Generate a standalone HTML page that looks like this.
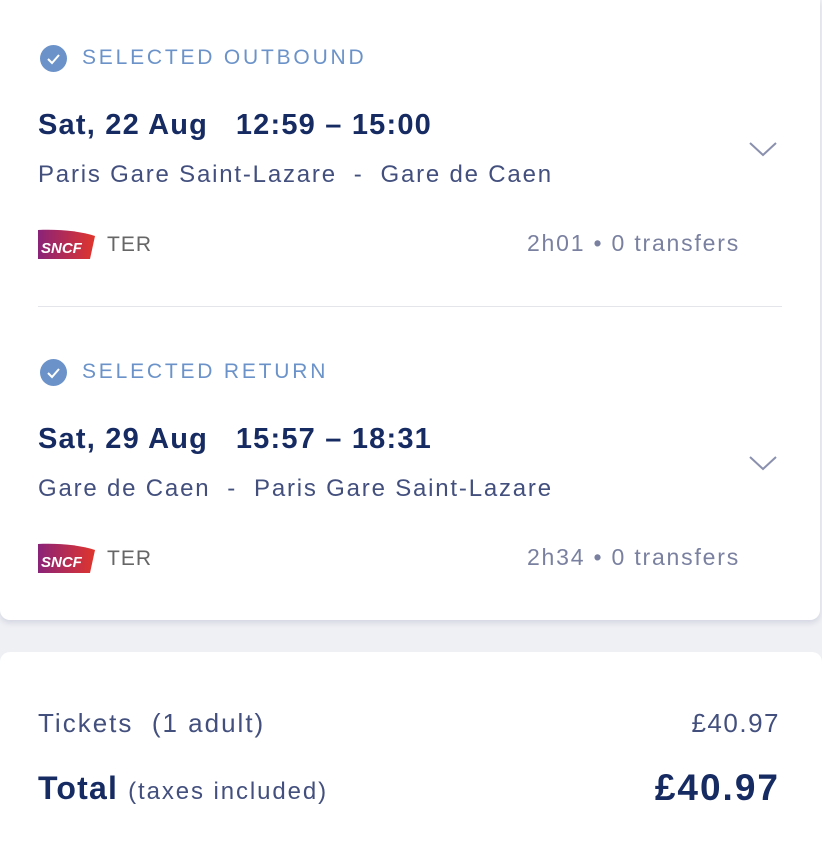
<!DOCTYPE html>
<html><head><style>
body{margin:0;width:822px;height:856px;background:#eff0f4;font-family:"Liberation Sans",sans-serif;overflow:hidden;position:relative}
.card{position:absolute;left:0;background:#fff;border-radius:0 0 10px 10px}
.c1{top:0;width:820px;height:620px;box-shadow:0 3px 6px rgba(60,70,120,.15)}
.c2{top:652px;width:822px;height:204px;border-radius:10px 10px 0 0}
.lbl{position:absolute;left:82px;color:#6b93c9;font-size:21px;letter-spacing:2.8px}
.chk{position:absolute;left:40px;width:27px;height:27px;border-radius:50%;background:#6b93c9}
.t{position:absolute;left:38px;color:#172b63;font-weight:bold;font-size:29px;letter-spacing:1.2px;white-space:pre}
.r{position:absolute;left:38px;color:#43507e;font-size:24px;letter-spacing:1.8px;white-space:pre}
.d{position:absolute;right:80px;color:#7a81a0;font-size:23px;letter-spacing:1.8px}
.ter{position:absolute;left:107px;color:#666;font-size:21px;letter-spacing:1px}
.sn{position:absolute;left:38px}
.chev{position:absolute;left:748px}
.sep{position:absolute;left:38px;top:306px;width:744px;height:1px;background:#e3e5ea}
</style></head><body>
<div class="card c1">
<div class="chk" style="top:45px"><svg width="27" height="27"><path d="M8 14l4 4 7-8" stroke="#fff" stroke-width="2" fill="none"/></svg></div>
<div class="lbl" style="top:46px">SELECTED OUTBOUND</div>
<div class="t" style="top:109px">Sat, 22 Aug   12:59 – 15:00</div>
<div class="r" style="top:161px">Paris Gare Saint-Lazare  -  Gare de Caen</div>
<svg class="chev" style="top:140px" width="30" height="18"><path d="M2 3l13 12 13-12" stroke="#8a90ad" stroke-width="2" fill="none"/></svg>
<svg class="sn" style="top:229px" width="58" height="30"><defs><linearGradient id="g" x1="0" x2="1"><stop offset="0" stop-color="#8a2378"/><stop offset="1" stop-color="#e0352c"/></linearGradient></defs><path d="M0 1C20 0 42 2 57 7L52 30H0Z" fill="url(#g)"/><text x="3" y="24" fill="#fff" font-size="15" font-style="italic" font-weight="bold" font-family="Liberation Sans">SNCF</text></svg>
<div class="ter" style="top:233px">TER</div>
<div class="d" style="top:230px">2h01 • 0 transfers</div>
<div class="sep"></div>
<div class="chk" style="top:359px"><svg width="27" height="27"><path d="M8 14l4 4 7-8" stroke="#fff" stroke-width="2" fill="none"/></svg></div>
<div class="lbl" style="top:360px">SELECTED RETURN</div>
<div class="t" style="top:423px">Sat, 29 Aug   15:57 – 18:31</div>
<div class="r" style="top:475px">Gare de Caen  -  Paris Gare Saint-Lazare</div>
<svg class="chev" style="top:454px" width="30" height="18"><path d="M2 3l13 12 13-12" stroke="#8a90ad" stroke-width="2" fill="none"/></svg>
<svg class="sn" style="top:543px" width="58" height="30"><path d="M0 1C20 0 42 2 57 7L52 30H0Z" fill="url(#g)"/><text x="3" y="24" fill="#fff" font-size="15" font-style="italic" font-weight="bold" font-family="Liberation Sans">SNCF</text></svg>
<div class="ter" style="top:547px">TER</div>
<div class="d" style="top:544px">2h34 • 0 transfers</div>
</div>
<div class="card c2">
<div class="r" style="top:56px;font-size:26px;letter-spacing:2px">Tickets  (1 adult)</div>
<div class="r" style="top:56px;left:auto;right:42px;font-size:26px;letter-spacing:1.5px">£40.97</div>
<div class="t" style="top:118px;font-size:32px">Total <span style="font-weight:normal;font-size:24px;letter-spacing:1.9px;color:#43507e">(taxes included)</span></div>
<div class="t" style="top:115px;left:auto;right:42px;font-size:37px;letter-spacing:2px">£40.97</div>
</div>
</body></html>
